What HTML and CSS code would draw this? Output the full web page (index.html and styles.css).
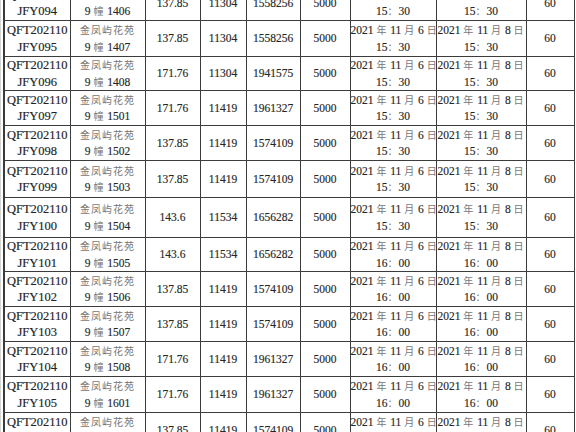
FILE: index.html
```html
<!DOCTYPE html>
<html lang="zh">
<head>
<meta charset="utf-8">
<title>房源表</title>
<link rel="stylesheet" href="styles.css">
</head>
<body>
<div class="sheet">
<table class="grid">
<colgroup>
<col class="w-code"><col class="w-room"><col class="w-area"><col class="w-unit"><col class="w-total"><col class="w-dep"><col class="w-date1"><col class="w-date2"><col class="w-min">
</colgroup>
<tbody>
<tr class="r35"><td class="code">QFT202110<br>JFY094</td><td><span class="cj">金凤屿花苑</span><br>9 <span class="cj">幢</span> 1406</td><td>137.85</td><td>11304</td><td>1558256</td><td>5000</td><td>2021 <span class="cj">年</span> 11 <span class="cj">月</span> 6 <span class="cj">日</span><br>15<span class="cj">：</span>30</td><td>2021 <span class="cj">年</span> 11 <span class="cj">月</span> 8 <span class="cj">日</span><br>15<span class="cj">：</span>30</td><td>60</td></tr>
<tr class="r36"><td class="code">QFT202110<br>JFY095</td><td><span class="cj">金凤屿花苑</span><br>9 <span class="cj">幢</span> 1407</td><td>137.85</td><td>11304</td><td>1558256</td><td>5000</td><td>2021 <span class="cj">年</span> 11 <span class="cj">月</span> 6 <span class="cj">日</span><br>15<span class="cj">：</span>30</td><td>2021 <span class="cj">年</span> 11 <span class="cj">月</span> 8 <span class="cj">日</span><br>15<span class="cj">：</span>30</td><td>60</td></tr>
<tr class="r34"><td class="code">QFT202110<br>JFY096</td><td><span class="cj">金凤屿花苑</span><br>9 <span class="cj">幢</span> 1408</td><td>171.76</td><td>11304</td><td>1941575</td><td>5000</td><td>2021 <span class="cj">年</span> 11 <span class="cj">月</span> 6 <span class="cj">日</span><br>15<span class="cj">：</span>30</td><td>2021 <span class="cj">年</span> 11 <span class="cj">月</span> 8 <span class="cj">日</span><br>15<span class="cj">：</span>30</td><td>60</td></tr>
<tr class="r35"><td class="code">QFT202110<br>JFY097</td><td><span class="cj">金凤屿花苑</span><br>9 <span class="cj">幢</span> 1501</td><td>171.76</td><td>11419</td><td>1961327</td><td>5000</td><td>2021 <span class="cj">年</span> 11 <span class="cj">月</span> 6 <span class="cj">日</span><br>15<span class="cj">：</span>30</td><td>2021 <span class="cj">年</span> 11 <span class="cj">月</span> 8 <span class="cj">日</span><br>15<span class="cj">：</span>30</td><td>60</td></tr>
<tr class="r35"><td class="code">QFT202110<br>JFY098</td><td><span class="cj">金凤屿花苑</span><br>9 <span class="cj">幢</span> 1502</td><td>137.85</td><td>11419</td><td>1574109</td><td>5000</td><td>2021 <span class="cj">年</span> 11 <span class="cj">月</span> 6 <span class="cj">日</span><br>15<span class="cj">：</span>30</td><td>2021 <span class="cj">年</span> 11 <span class="cj">月</span> 8 <span class="cj">日</span><br>15<span class="cj">：</span>30</td><td>60</td></tr>
<tr class="r37"><td class="code">QFT202110<br>JFY099</td><td><span class="cj">金凤屿花苑</span><br>9 <span class="cj">幢</span> 1503</td><td>137.85</td><td>11419</td><td>1574109</td><td>5000</td><td>2021 <span class="cj">年</span> 11 <span class="cj">月</span> 6 <span class="cj">日</span><br>15<span class="cj">：</span>30</td><td>2021 <span class="cj">年</span> 11 <span class="cj">月</span> 8 <span class="cj">日</span><br>15<span class="cj">：</span>30</td><td>60</td></tr>
<tr class="r40"><td class="code">QFT202110<br>JFY100</td><td><span class="cj">金凤屿花苑</span><br>9 <span class="cj">幢</span> 1504</td><td>143.6</td><td>11534</td><td>1656282</td><td>5000</td><td>2021 <span class="cj">年</span> 11 <span class="cj">月</span> 6 <span class="cj">日</span><br>15<span class="cj">：</span>30</td><td>2021 <span class="cj">年</span> 11 <span class="cj">月</span> 8 <span class="cj">日</span><br>15<span class="cj">：</span>30</td><td>60</td></tr>
<tr class="r34"><td class="code">QFT202110<br>JFY101</td><td><span class="cj">金凤屿花苑</span><br>9 <span class="cj">幢</span> 1505</td><td>143.6</td><td>11534</td><td>1656282</td><td>5000</td><td>2021 <span class="cj">年</span> 11 <span class="cj">月</span> 6 <span class="cj">日</span><br>16<span class="cj">：</span>00</td><td>2021 <span class="cj">年</span> 11 <span class="cj">月</span> 8 <span class="cj">日</span><br>16<span class="cj">：</span>00</td><td>60</td></tr>
<tr class="r35"><td class="code">QFT202110<br>JFY102</td><td><span class="cj">金凤屿花苑</span><br>9 <span class="cj">幢</span> 1506</td><td>137.85</td><td>11419</td><td>1574109</td><td>5000</td><td>2021 <span class="cj">年</span> 11 <span class="cj">月</span> 6 <span class="cj">日</span><br>16<span class="cj">：</span>00</td><td>2021 <span class="cj">年</span> 11 <span class="cj">月</span> 8 <span class="cj">日</span><br>16<span class="cj">：</span>00</td><td>60</td></tr>
<tr class="r35"><td class="code">QFT202110<br>JFY103</td><td><span class="cj">金凤屿花苑</span><br>9 <span class="cj">幢</span> 1507</td><td>137.85</td><td>11419</td><td>1574109</td><td>5000</td><td>2021 <span class="cj">年</span> 11 <span class="cj">月</span> 6 <span class="cj">日</span><br>16<span class="cj">：</span>00</td><td>2021 <span class="cj">年</span> 11 <span class="cj">月</span> 8 <span class="cj">日</span><br>16<span class="cj">：</span>00</td><td>60</td></tr>
<tr class="r35"><td class="code">QFT202110<br>JFY104</td><td><span class="cj">金凤屿花苑</span><br>9 <span class="cj">幢</span> 1508</td><td>171.76</td><td>11419</td><td>1961327</td><td>5000</td><td>2021 <span class="cj">年</span> 11 <span class="cj">月</span> 6 <span class="cj">日</span><br>16<span class="cj">：</span>00</td><td>2021 <span class="cj">年</span> 11 <span class="cj">月</span> 8 <span class="cj">日</span><br>16<span class="cj">：</span>00</td><td>60</td></tr>
<tr class="r36"><td class="code">QFT202110<br>JFY105</td><td><span class="cj">金凤屿花苑</span><br>9 <span class="cj">幢</span> 1601</td><td>171.76</td><td>11419</td><td>1961327</td><td>5000</td><td>2021 <span class="cj">年</span> 11 <span class="cj">月</span> 6 <span class="cj">日</span><br>16<span class="cj">：</span>00</td><td>2021 <span class="cj">年</span> 11 <span class="cj">月</span> 8 <span class="cj">日</span><br>16<span class="cj">：</span>00</td><td>60</td></tr>
<tr class="r35"><td class="code">QFT202110<br>JFY106</td><td><span class="cj">金凤屿花苑</span><br>9 <span class="cj">幢</span> 1602</td><td>137.85</td><td>11419</td><td>1574109</td><td>5000</td><td>2021 <span class="cj">年</span> 11 <span class="cj">月</span> 6 <span class="cj">日</span><br>16<span class="cj">：</span>00</td><td>2021 <span class="cj">年</span> 11 <span class="cj">月</span> 8 <span class="cj">日</span><br>16<span class="cj">：</span>00</td><td>60</td></tr>
</tbody>
</table>
</div>
</body>
</html>
```

FILE: styles.css
```css
html, body {
  margin: 0;
  padding: 0;
  background: #ffffff;
  overflow: hidden;
  height: 432px;
}

.sheet {
  padding-left: 2px;
  margin-top: -15px;
  border-left: 1px solid #d4d4d4;
}

.grid {
  border-collapse: collapse;
  table-layout: fixed;
  width: 570px;
  font-family: "Liberation Serif", "Times New Roman", serif;
  font-size: 11.5px;
  line-height: 16.5px;
  color: #262626;
  -webkit-text-stroke: 0.15px #262626;
  border-left: 2px solid #3a3a3a;
}

.grid td {
  border: 1px solid #3c3c3c;
  padding: 0;
  text-align: center;
  vertical-align: middle;
  white-space: nowrap;
  overflow: visible;
}

.w-code { width: 66px; }
.w-room { width: 75px; }
.w-area { width: 55px; }
.w-unit { width: 46px; }
.w-total { width: 54px; }
.w-dep { width: 50px; }
.w-date1 { width: 86px; }
.w-date2 { width: 90px; }
.w-min { width: 48px; }

.r34 { height: 34px; }
.r35 { height: 35px; }
.r36 { height: 36px; }
.r37 { height: 37px; }
.r40 { height: 40px; }

.grid td.code {
  font-size: 12.5px;
  color: #222;
}

.cj {
  font-family: "Noto Sans CJK SC", sans-serif;
  font-size: 10px;
  color: #777;
  -webkit-text-stroke: 0;
  letter-spacing: 1px;
}
```
